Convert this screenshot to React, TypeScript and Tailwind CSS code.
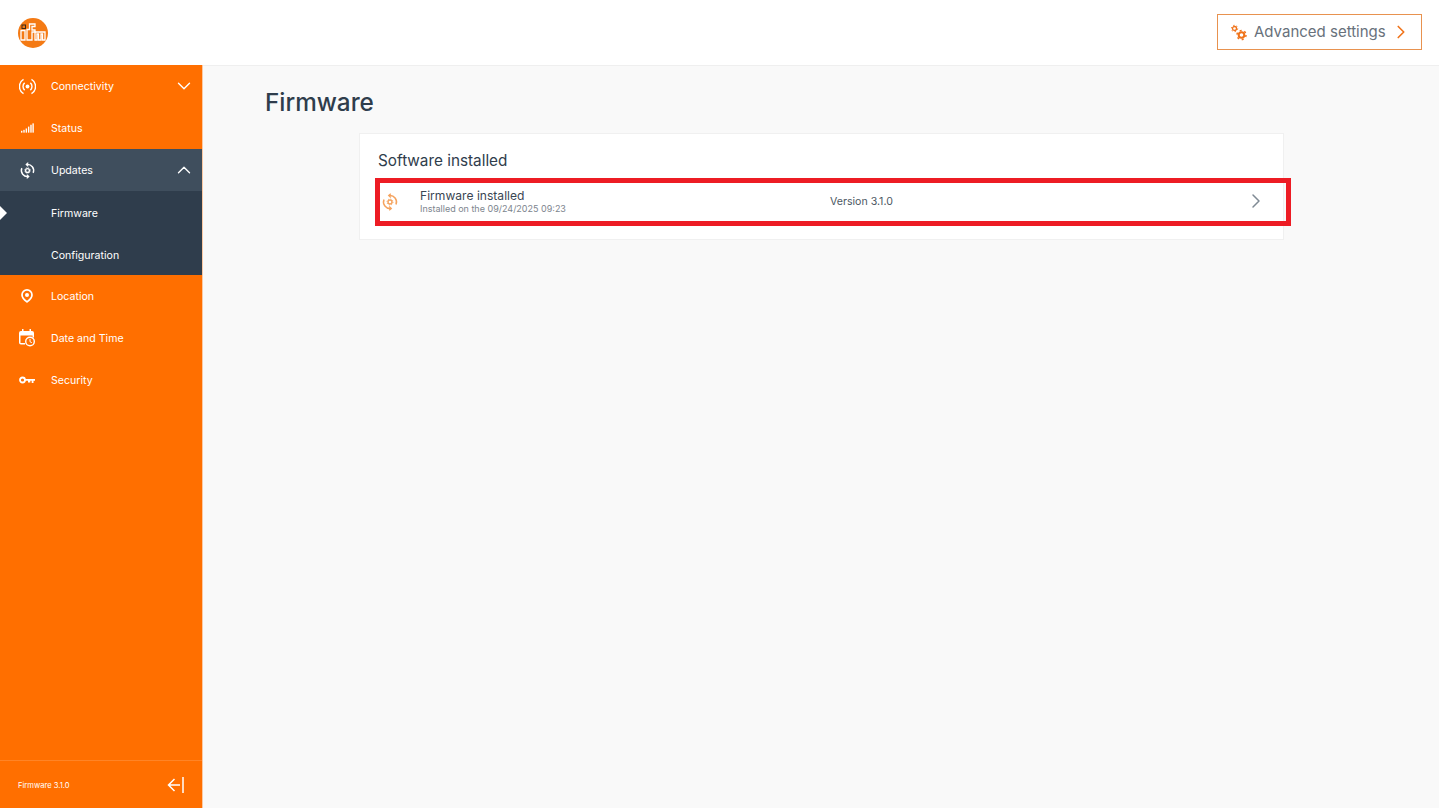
import { ChevronDown, ChevronRight, ChevronUp } from "lucide-react";

function Logo() {
  return (
    <svg width="32" height="32" viewBox="0 0 32 32">
      <circle cx="16" cy="16" r="15" fill="#f47a14" />
      <rect x="5" y="8" width="3.500" height="3.500" fill="none" stroke="#3a2a1a" strokeWidth="1" />
      <g fill="none" stroke="#fff" strokeWidth="1.300">
        <path d="M4 13.500h4v9.500H4z" />
        <path d="M10 23v-10.500h2.500V7h5.500v2.500h-3V13h3v2h-3v8z" />
        <path d="M18 15h10v8h-2.500v-6h-1.500v6h-2.500v-6H20v6h-2z" />
      </g>
    </svg>
  );
}

function SyncGear({ size = 18 }: { size?: number }) {
  return (
    <svg width={size} height={size} viewBox="0 0 18 18" fill="none" stroke="currentColor" strokeWidth="1.500">
      <path d="M8 2.600A6.500 6.500 0 0 1 15 11.500" />
      <path d="M10 15.400A6.500 6.500 0 0 1 3 6.500" />
      <path d="M9.800 .7 7.700 2.600l2.100 1.900" strokeWidth="1.300" />
      <path d="M8.200 13.500l2.100 1.900-2.100 1.900" strokeWidth="1.300" />
      <circle cx="9" cy="9" r="2" strokeWidth="1.400" />
      <circle cx="9" cy="9" r="3" strokeWidth="1" strokeDasharray="1 1.360" />
    </svg>
  );
}

function Radio() {
  return (
    <svg width="17" height="17" viewBox="0 0 18 18" fill="none" stroke="currentColor" strokeWidth="1.500">
      <circle cx="9" cy="9" r="2" fill="currentColor" stroke="none" />
      <path d="M6 5.200a5 5 0 0 0 0 7.600M12 5.200a5 5 0 0 1 0 7.600" />
      <path d="M4.800 1.500a8.700 8.700 0 0 0 0 15M13.200 1.500a8.700 8.700 0 0 1 0 15" />
    </svg>
  );
}

function Signal() {
  return (
    <svg width="13" height="10" viewBox="0 0 14 10" fill="currentColor">
      <rect x="0" y="8" width="1.500" height="2" />
      <rect x="2.500" y="7" width="1.500" height="3" />
      <rect x="5" y="5.500" width="1.500" height="4.500" />
      <rect x="7.500" y="3.500" width="1.500" height="6.500" />
      <rect x="10" y="1.500" width="1.500" height="8.500" />
      <rect x="12.300" y="0" width="1.500" height="10" />
    </svg>
  );
}

function Pin() {
  return (
    <svg width="12" height="14" viewBox="0 0 12 14" fill="none">
      <path stroke="currentColor" strokeWidth="1.700" d="M6 .9a5 5 0 0 1 5 5c0 3-3 5.500-5 7-2-1.500-5-4-5-7a5 5 0 0 1 5-5z" />
      <circle cx="6" cy="5.900" r="2" fill="currentColor" />
    </svg>
  );
}

function CalendarClock() {
  return (
    <svg width="16" height="18" viewBox="0 0 16 18" fill="none">
      <path fill="currentColor" d="M3 0h1.500v2h6V0H12v2h1a2 2 0 0 1 2 2v4.500h-1.500V6.500h-12V14H6v1.500H2a2 2 0 0 1-2-2V4a2 2 0 0 1 2-2h1z" />
      <circle cx="11" cy="12.500" r="4.300" stroke="currentColor" strokeWidth="1.400" />
      <path d="M11 10v2.700l1.800 1" stroke="currentColor" strokeWidth="1" />
    </svg>
  );
}

function Key() {
  return (
    <svg width="16" height="8" viewBox="0 0 16 8" fill="none">
      <circle cx="3.500" cy="4" r="2.500" stroke="currentColor" strokeWidth="1.800" />
      <path d="M6 3h10v1.800h-1.500V7h-1.800V4.800h-1.400V6.500H9V4.800H6z" fill="currentColor" />
    </svg>
  );
}

function Gears() {
  return (
    <svg width="16" height="17" viewBox="0 0 16 17" fill="none" stroke="#f0731a">
      <circle cx="3.500" cy="4.500" r="2" strokeWidth="1.300" />
      <circle cx="3.500" cy="4.500" r="3.200" strokeWidth="1" strokeDasharray="1.300 2.050" />
      <circle cx="10.500" cy="11" r="2.800" strokeWidth="2" />
      <circle cx="10.500" cy="11" r="4.500" strokeWidth="1.500" strokeDasharray="2 2.710" />
    </svg>
  );
}

function NavItem({ icon, label, right, active }: any) {
  return (
    <div className={`flex h-[42px] items-center ${active ? "bg-[#3f4e5d]" : ""}`}>
      <div className="flex w-[51px] shrink-0 justify-center pl-[3px]">{icon}</div>
      <span className="flex-1 pt-[2px] text-[10.600px] text-white">{label}</span>
      {right}
    </div>
  );
}

export default function App() {
  return (
    <div className="flex h-[808px] flex-col overflow-hidden bg-[#f9f9f9] font-['Inter',sans-serif]">
      <header className="flex h-[65px] shrink-0 items-center justify-between bg-white px-[17px]">
        <Logo />
        <button className="mb-px flex h-[36px] w-[205px] items-center border border-[#e8924f] pl-[13px] text-[15px] text-[#68717b]">
          <Gears />
          <span className="ml-[7px]">Advanced settings</span>
          <ChevronRight size={22} strokeWidth={1.800} className="ml-[4px] text-[#f0731a]" />
        </button>
      </header>

      <div className="flex min-h-0 flex-1">
        <aside className="flex w-[203px] shrink-0 flex-col border-r border-[#fbc9a3] bg-[#ff6f00] text-white">
          <nav className="flex-1">
            <NavItem icon={<Radio />} label="Connectivity" right={<ChevronDown size={22} strokeWidth={1.500} className="mr-[7px]" />} />
            <NavItem icon={<Signal />} label="Status" />
            <NavItem icon={<SyncGear size={17} />} label="Updates" active right={<ChevronUp size={22} strokeWidth={1.500} className="mr-[7px]" />} />
            <div className="bg-[#2f3d4c]">
              <div className="relative flex h-[42px] items-center pt-[4px] pl-[51px] text-[10.600px] text-white">
                <span className="absolute top-[15px] left-0 h-0 w-0 border-y-[7px] border-l-[7px] border-y-transparent border-l-white" />
                Firmware
              </div>
              <div className="flex h-[42px] items-center pt-[4px] pl-[51px] text-[10.600px] text-white">Configuration</div>
            </div>
            <NavItem icon={<Pin />} label="Location" />
            <NavItem icon={<CalendarClock />} label="Date and Time" />
            <NavItem icon={<Key />} label="Security" />
          </nav>
          <div className="flex h-[48px] items-center justify-between border-t border-[#ff8426] pr-[18px] pl-[18px]">
            <span className="pt-[2px] text-[7.600px] text-white">Firmware 3.1.0</span>
            <svg width="17" height="16" viewBox="0 0 17 16" fill="none" stroke="currentColor" strokeWidth="1.500">
              <path d="M16 0v16" />
              <path d="M13 8H1.500M7.500 2 1.500 8l6 6" />
            </svg>
          </div>
        </aside>

        <main className="flex-1 border-t border-[#efefef] pt-[21px]">
          <h1 className="ml-[62px] text-[24.300px] leading-[30px] font-medium text-[#2f3d4c]">Firmware</h1>
          <section className="mt-[16px] ml-[156px] h-[107px] w-[925px] border border-[#f0f0f0] bg-white pt-[17px] pl-[18px]">
            <h2 className="text-[15.300px] leading-[20px] text-[#2f3d4c]">Software installed</h2>
            <div className="mt-[7px] -ml-[3px] flex h-[48px] w-[916px] items-center border-[5px] border-[#ed1c24] pl-[1px]">
              <div className="w-[39px] text-[#f5a35e]">
                <SyncGear size={18} />
              </div>
              <div className="w-[410px]">
                <div className="pb-px text-[12.100px] leading-[12px] text-[#3a4653]">Firmware installed</div>
                <div className="text-[9px] leading-[11px] text-[#7d858e]">Installed on the 09/24/2025 09:23</div>
              </div>
              <div className="flex-1 text-[10.600px] text-[#4d5863]">Version 3.1.0</div>
              <ChevronRight size={24} strokeWidth={1.500} className="mr-[18px] mb-[2px] text-[#7f8a94]" />
            </div>
          </section>
        </main>
      </div>
    </div>
  );
}
